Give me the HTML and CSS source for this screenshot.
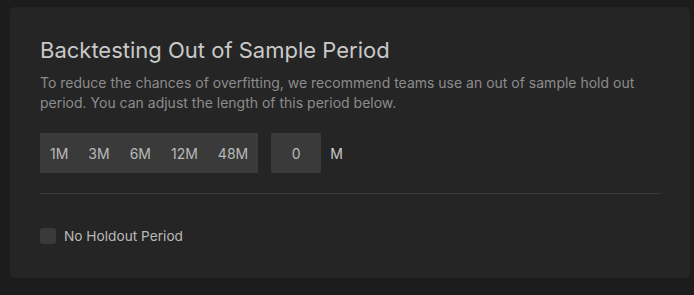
FILE: index.html
```html
<!DOCTYPE html>
<html>
<head>
<meta charset="utf-8">
<link rel="stylesheet" href="styles.css">
</head>
<body>
<div class="card">
  <h1 class="title">Backtesting Out of Sample Period</h1>
  <p class="desc">To reduce the chances of overfitting, we recommend teams use an out of sample hold out period. You can adjust the length of this period below.</p>
  <div class="controls">
    <div class="group">
      <button class="opt">1M</button>
      <button class="opt">3M</button>
      <button class="opt">6M</button>
      <button class="opt">12M</button>
      <button class="opt">48M</button>
    </div>
    <div class="num">0</div>
    <span class="unit">M</span>
  </div>
  <div class="divider"></div>
  <label class="check">
    <span class="box"></span>
    <span class="label">No Holdout Period</span>
  </label>
</div>
</body>
</html>
```
FILE: styles.css
```css
html, body {
  margin: 0;
  padding: 0;
  background: #1c1c1c;
  font-family: Inter, "Noto Sans", sans-serif;
}
body {
  padding: 7px 4px 17px 10px;
}
.card {
  background: #252525;
  border-radius: 5px;
  padding: 29px 29px 0 30px;
  height: 242px;
}
.title {
  margin: 0;
  font-size: 22px;
  font-weight: 400;
  color: #c9c9c9;
  line-height: 28px;
}
.desc {
  margin: 9px 0 0;
  font-size: 14px;
  line-height: 20px;
  color: #8c8c8c;
}
.controls {
  display: flex;
  align-items: center;
  margin-top: 20px;
  height: 40px;
}
.group {
  display: flex;
  background: #3a3a3a;
  height: 40px;
}
.opt {
  background: transparent;
  border: none;
  font-family: inherit;
  font-size: 14px;
  color: #b9b9b9;
  padding: 0 10px;
  height: 40px;
}
.num {
  margin-left: 13px;
  width: 50px;
  height: 40px;
  background: #3a3a3a;
  color: #b9b9b9;
  font-size: 14px;
  display: flex;
  align-items: center;
  justify-content: center;
}
.unit {
  margin-left: 9px;
  font-size: 14px;
  color: #c9c9c9;
}
.divider {
  margin-top: 20px;
  height: 1px;
  background: #3a3a3a;
}
.check {
  display: flex;
  align-items: center;
  margin-top: 34px;
}
.box {
  width: 16px;
  height: 16px;
  border-radius: 3px;
  background: #3a3a3a;
}
.label {
  margin-left: 8px;
  font-size: 13.7px;
  color: #b9b9b9;
}
```
